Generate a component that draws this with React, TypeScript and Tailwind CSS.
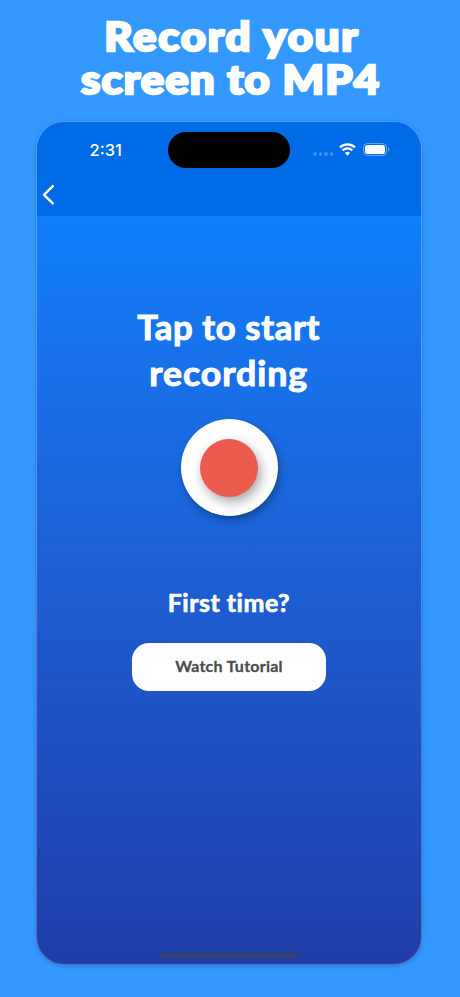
const StatusBar = () => {
  return (
    <div className="flex h-[59px] items-start">
      <div className="w-[131px] pt-[16px] pl-[52.5px] font-['Inter',sans-serif] text-[16.5px] leading-6 font-medium text-white">
        2:31
      </div>
      <div className="mt-[10px] h-9 w-[122px] rounded-full bg-black" />
      <div className="flex items-center pt-[21px] pl-[23px]">
        <div className="mt-[9px] flex gap-[2px]">
          {[0, 1, 2, 3].map((dot) => (
            <span key={dot} className="size-[3.5px] rounded-full bg-white/25" />
          ))}
        </div>
        <svg className="ml-[6px] h-[13px] w-[17px]" viewBox="0 0 17 13" fill="none">
          <path d="M1 4.4a10.8 10.8 0 0 1 15 0" stroke="white" strokeWidth="2.4" />
          <path d="M3.7 7.4a6.9 6.9 0 0 1 9.6 0" stroke="white" strokeWidth="2.2" />
          <path d="M8.5 12.7 5.9 10a3.8 3.8 0 0 1 5.2 0Z" fill="white" />
        </svg>
        <svg className="ml-[6.5px] h-[13px] w-[27px]" viewBox="0 0 27 13" fill="none">
          <rect x="0.5" y="0.5" width="23" height="12" rx="4" stroke="white" strokeOpacity="0.4" />
          <rect x="2" y="2" width="20" height="9" rx="2.6" fill="white" />
          <path d="M25 4.5v4c1.8-.7 1.8-3.3 0-4Z" fill="white" fillOpacity="0.45" />
        </svg>
      </div>
    </div>
  );
};

const App = () => {
  return (
    <div className="flex h-[997px] w-[460px] flex-col items-center overflow-hidden bg-[#3399ff] font-['Lato',sans-serif] text-white">
      <h1 className="flex h-[121px] flex-col items-center pt-[15px] text-[39px] leading-[43px] font-black whitespace-nowrap [-webkit-text-stroke:2.4px_white]">
        <span className="ml-[3px] scale-x-[1.12] tracking-[1.6px]">Record your</span>
        <span className="ml-[2px] scale-x-[1.12] tracking-[1px]">screen to MP4</span>
      </h1>

      {/* Phone */}
      <div className="-ml-[2px] flex h-[844px] w-[386px] flex-col overflow-hidden rounded-[28px] border border-white/25 bg-linear-to-b from-[#0f7ffb] from-11% to-[#203da9] bg-origin-border shadow-[0_1px_4px_rgba(0,0,0,0.2)]">
        <header className="h-[94px] shrink-0 bg-[#006be6]">
          <StatusBar />
          <button className="ml-[5px] block" aria-label="Back">
            <svg className="h-[28px] w-[14px]" viewBox="0 0 14 28" fill="none">
              <path
                d="M10.8 5.2 2 13.8l8.8 8.6"
                stroke="white"
                strokeWidth="2.5"
                strokeLinecap="round"
                strokeLinejoin="round"
              />
            </svg>
          </button>
        </header>

        <main className="flex flex-1 flex-col items-center">
          <h2 className="mt-[88px] flex flex-col items-center text-[34px] leading-[46px] font-bold whitespace-nowrap [-webkit-text-stroke:1px_white]">
            <span className="scale-x-[1.02] tracking-[0.6px]">Tap to start</span>
            <span className="scale-x-[1.05] tracking-[0.9px]">recording</span>
          </h2>

          <button
            className="mt-[23px] flex size-[97px] items-center justify-center rounded-full bg-white shadow-[2px_4px_8px_rgba(0,0,0,0.3)]"
            aria-label="Record"
          >
            <span className="size-[58px] rounded-full bg-[#eb5b4e] shadow-[3px_5px_12px_rgba(0,0,0,0.35)]" />
          </button>

          <p className="mt-[71px] scale-x-[1.04] text-2xl leading-8 font-bold tracking-[0.5px] [-webkit-text-stroke:0.7px_white]">
            First time?
          </p>
          <button className="mt-[24px] h-[48px] w-[194px] rounded-[17px] bg-white pb-[2px] text-base font-bold tracking-[0.25px] text-[#4d4d4d] [-webkit-text-stroke:0.3px_#4d4d4d]">
            Watch Tutorial
          </button>

          <div className="mt-auto mb-[6px] h-[5px] w-[138px] rounded-full bg-[#38426e]" />
        </main>
      </div>
    </div>
  );
};

export default App;
